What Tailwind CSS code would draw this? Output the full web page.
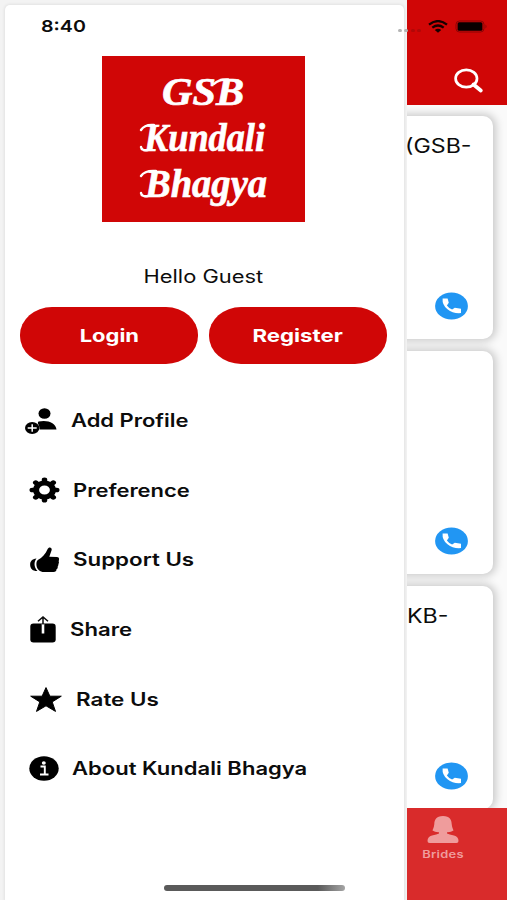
<!DOCTYPE html>
<html lang="en">
    <head>
        <meta charset="UTF-8" />
        <meta name="viewport" content="width=device-width, initial-scale=1" />
        <title>GSB Kundali Bhagya</title>
        <script src="https://cdn.jsdelivr.net/npm/@tailwindcss/browser@4"></script>
    </head>
    <body class="relative w-[507px] h-[900px] overflow-hidden bg-[#fafafa] font-['Inter',sans-serif] text-[#0c0c0c]">

        <!-- Profile list behind the drawer -->
        <main class="flex flex-col w-full h-full">
            <header class="shrink-0 h-[105px] bg-[#d00606] flex flex-col items-end">
                <div class="h-[53px] pr-[19px] flex items-center gap-[7px]">
                    <svg class="w-[20px] h-[13px]" viewBox="0 0 20 13" fill="none" stroke="#160000" stroke-width="2.3">
                        <path d="M1 4.6Q10-2.4 19 4.6" />
                        <path d="M4.3 7.7Q10 3.3 15.7 7.7" />
                        <path d="M6.8 9.9Q10 7.4 13.2 9.9L10 12.8Z" fill="#160000" stroke="none" />
                    </svg>
                    <svg class="w-[33px] h-[13px]" viewBox="0 0 33 13">
                        <rect x="1" y="1" width="28" height="11" rx="3.5" fill="none" stroke="#8a0505" stroke-width="1" />
                        <rect x="2.6" y="2.2" width="24.8" height="8.6" rx="1.6" fill="#080000" />
                        <path d="M30.5 4.5Q32.5 6.5 30.5 8.5Z" fill="#8a0505" />
                    </svg>
                </div>
                <svg class="mt-[15px] mr-[23px] w-[30px] h-[26px]" viewBox="0 0 30 26" fill="none" stroke="#fff">
                    <ellipse cx="12.300" cy="10.500" rx="10.700" ry="8.700" stroke-width="2.700" />
                    <path d="M19.500 16.500l7.300 6" stroke-width="3.800" stroke-linecap="round" />
                </svg>
            </header>

            <div class="flex-1 min-h-0 overflow-hidden flex flex-col pt-[11px] pr-[14px]">
                <section class="shrink-0 h-[223px] mb-[12px] rounded-r-[10px] bg-white shadow-[1px_0_8px_2px_rgba(0,0,0,0.20)] flex flex-col justify-between pl-[405px] pt-[17px] pb-[19.500px]">
                    <h2 class="text-[19.5px] leading-[26px] whitespace-nowrap origin-left scale-x-[1.19]">(GSB-</h2>
                    <svg class="ml-[30px] w-[33px] h-[28px]" viewBox="0 0 33 28">
                        <ellipse cx="16.5" cy="14" rx="16.4" ry="13.6" fill="#2196f3" />
                        <path d="M7.600 6.400h5l1.200 4.400-1.900 2.600q2 2.800 5.200 4.200l2.700-1.800 6.200 1v4.300q-8 .7-13.500-3.800T7.600 6.400Z" fill="#fff" />
                    </svg>
                </section>
                <section class="shrink-0 h-[223px] mb-[12px] rounded-r-[10px] bg-white shadow-[1px_0_8px_2px_rgba(0,0,0,0.20)] flex flex-col justify-end pl-[405px] pb-[19.500px]">
                    <svg class="ml-[30px] w-[33px] h-[28px]" viewBox="0 0 33 28">
                        <ellipse cx="16.5" cy="14" rx="16.4" ry="13.6" fill="#2196f3" />
                        <path d="M7.600 6.400h5l1.200 4.400-1.900 2.600q2 2.800 5.200 4.200l2.700-1.800 6.200 1v4.300q-8 .7-13.500-3.800T7.600 6.400Z" fill="#fff" />
                    </svg>
                </section>
                <section class="shrink-0 h-[223px] rounded-r-[10px] bg-white shadow-[1px_0_8px_2px_rgba(0,0,0,0.20)] flex flex-col justify-between pl-[406.500px] pt-[17px] pb-[19.500px]">
                    <h2 class="text-[19.5px] leading-[26px] whitespace-nowrap origin-left scale-x-[1.19]">KB-</h2>
                    <svg class="ml-[28.500px] w-[33px] h-[28px]" viewBox="0 0 33 28">
                        <ellipse cx="16.5" cy="14" rx="16.4" ry="13.6" fill="#2196f3" />
                        <path d="M7.600 6.400h5l1.200 4.400-1.900 2.600q2 2.800 5.200 4.200l2.700-1.800 6.200 1v4.300q-8 .7-13.500-3.800T7.600 6.400Z" fill="#fff" />
                    </svg>
                </section>
            </div>

            <nav class="shrink-0 relative h-[92px] bg-[#d92b2b] flex justify-end pr-[32px]">
                <div class="w-[64px] flex flex-col items-center pt-[8px] text-[#ef9c9c]">
                    <svg class="w-[32px] h-[27px]" viewBox="0 0 32 27" fill="currentColor">
                        <path d="M16 0C9 0 7.500 4 7.300 8 7 11.500 6 13 5.500 14.500Q8 16.500 12 16.300V17.500Q10 18.500 5 19.500 .5 20.500 .5 25 .5 27 2.500 27H29.500Q31.500 27 31.500 25 31.500 20.500 27 19.500 22 18.500 20 17.500V16.300Q24 16.500 26.500 14.500C26 13 25 11.500 24.700 8 24.500 4 23 0 16 0Z" />
                    </svg>
                    <span class="mt-[4px] text-[10px] leading-[14px] font-semibold scale-x-[1.29] tracking-[0.2px]">Brides</span>
                </div>
            </nav>
        </main>

        <!-- Drawer -->
        <aside class="absolute left-0 top-0 w-[406.500px] h-full bg-[#f3f3f3] pl-[5px] pt-[5px] pr-[3px]">
            <div class="w-full h-full rounded-t-[5px] bg-white shadow-[0_0_3px_1px_rgba(0,0,0,0.07)] flex flex-col">
                <div class="shrink-0 h-[51px] pl-[36px] flex">
                    <span class="mt-[9px] text-[16.500px] leading-[24px] font-semibold origin-left scale-x-[1.19]">8:40</span>
                </div>

                <svg class="shrink-0 ml-[97px] w-[203px] h-[166px] bg-[#d00606]" viewBox="0 0 203 166" fill="#fff" stroke="#fff" stroke-width=".7" font-family="'Liberation Serif', serif" font-weight="bold" font-style="italic" font-size="41">
                    <text x="60" y="49" textLength="82" lengthAdjust="spacingAndGlyphs">GSB</text>
                    <text x="42" y="95" textLength="121" lengthAdjust="spacingAndGlyphs">Kundali</text>
                    <text x="43" y="141" textLength="122" lengthAdjust="spacingAndGlyphs">Bhagya</text>
                    <!-- swashes on the capitals -->
                    <path d="M112 28Q117 23 126 23.500M39 74Q43 68 52 69M39 120Q43 114 54 115M39 91Q39.500 95 46 94M39 137Q39.500 141 46 140" fill="none" stroke-width="2.400" stroke-linecap="round" />
                </svg>

                <p class="mt-[41.500px] h-[26px] pr-[1.500px] text-center text-[18px] leading-[26px] scale-x-[1.215]">Hello Guest</p>

                <div class="mt-[17.500px] pl-[15px] pr-[16.500px] flex gap-[11px] text-white text-[18px] font-bold">
                    <button class="flex-1 h-[57px] rounded-[32px/28px] bg-[#d00606]"><span class="inline-block scale-x-[1.22]">Login</span></button>
                    <button class="flex-1 h-[57px] rounded-[32px/28px] bg-[#d00606]"><span class="inline-block scale-x-[1.235]">Register</span></button>
                </div>

                <ul class="mt-[22px] text-[18px] font-semibold whitespace-nowrap">
                    <li class="h-[69.600px] flex items-center">
                        <svg class="ml-[20px] w-[34px] h-[28px]" viewBox="0 0 34 28">
                            <ellipse cx="19.500" cy="6.500" rx="6" ry="5.300" />
                            <path d="M14.500 22.500C15 18 11.500 16.500 13.500 14.500 22 12.500 31 15.500 31.500 22.500Z" />
                            <ellipse cx="7.200" cy="21" rx="7.200" ry="6" />
                            <path d="M2.700 21h9M7.200 17.300v7.400" stroke="#fff" stroke-width="1.500" />
                        </svg>
                        <span class="ml-[12px] origin-left scale-x-[1.22]">Add Profile</span>
                    </li>
                    <li class="h-[69.600px] flex items-center">
                        <svg class="ml-[24px] w-[31px] h-[26px]" viewBox="0 0 31 26">
                            <g transform="translate(15.500 13) scale(1.200 1)" fill="none" stroke="#000">
                                <circle r="7" stroke-width="5" />
                                <!-- eight teeth -->
                                <path d="M0-10.200V-8M0 8v2.200M-10.200 0h2.200M8 0h2.200M-7.300-7.300l2 2M5.300 5.300l2 2M-7.300 7.300l2-2M5.300-5.300l2-2" stroke-width="4.600" stroke-linecap="round" />
                            </g>
                        </svg>
                        <span class="ml-[13px] origin-left scale-x-[1.22]">Preference</span>
                    </li>
                    <li class="h-[69.600px] flex items-center">
                        <svg class="ml-[25px] w-[30px] h-[26px]" viewBox="0 0 30 26">
                            <path d="M6.500 11.500C1.500 12-.2 15 .2 18.500 .6 22 3 24.300 7.500 24 4 20.500 3.500 15.500 6.500 11.500Z" />
                            <path d="M8.200 12.800C12 11 15.500 7 17.800 1.800 19.500-.8 22.500.8 21.500 3.500L19.300 9.800 27 10Q29.500 10.300 29 12.500L28.700 14.500Q29.300 15.500 28.400 17 28.600 18.600 27.700 19.500 28 21.500 26.500 22.300 26.500 25 23.500 25H14C10 25 7 22.500 6.500 18.500 6.200 16 6.500 14 8.200 12.800Z" />
                        </svg>
                        <span class="ml-[13px] origin-left scale-x-[1.24]">Support Us</span>
                    </li>
                    <li class="h-[69.600px] flex items-center">
                        <svg class="ml-[25px] w-[26px] h-[27px]" viewBox="0 0 26 27">
                            <rect x=".3" y="7.500" width="25.400" height="19" rx="3.200" />
                            <path d="M13 8v9.500" stroke="#fff" stroke-width="2.600" />
                            <path d="M13 8.500v-7M8 5.300l5-4.300 5 4.300" fill="none" stroke="#0c0c0c" stroke-width="1.500" />
                        </svg>
                        <span class="ml-[14px] origin-left scale-x-[1.23]">Share</span>
                    </li>
                    <li class="h-[69.600px] flex items-center">
                        <svg class="ml-[25px] w-[32px] h-[25px]" viewBox="0 0 32 25" stroke="#000" stroke-linejoin="round">
                            <path d="M16 .6L19.900 9.200H31.300L22.200 14.900 25.500 24.400 16 18.800 6.500 24.400 9.800 14.900 .7 9.200H12.100Z" />
                        </svg>
                        <span class="ml-[14px] origin-left scale-x-[1.245]">Rate Us</span>
                    </li>
                    <li class="h-[69.600px] flex items-center">
                        <svg class="ml-[24px] w-[30px] h-[25px]" viewBox="0 0 30 25">
                            <ellipse cx="15" cy="12.500" rx="14.700" ry="12.200" />
                            <ellipse cx="14.800" cy="7" rx="2" ry="1.700" fill="#fff" />
                            <path d="M11.500 10.500h4.300v7.800M11 18.500h8.500" fill="none" stroke="#fff" stroke-width="1.900" />
                        </svg>
                        <span class="ml-[13px] origin-left scale-x-[1.225]">About Kundali Bhagya</span>
                    </li>
                </ul>
            </div>
        </aside>

        <!-- Signal dots sit across the drawer edge -->
        <div class="absolute left-[397.500px] top-[29px] flex gap-[2.500px]">
            <i class="w-[4px] h-[3px] rounded-full bg-[#b5b5b5]"></i>
            <i class="w-[4px] h-[3px] rounded-full bg-[#b5b5b5]"></i>
            <i class="w-[4px] h-[3px] rounded-full bg-[#b00808]"></i>
            <i class="w-[4px] h-[3px] rounded-full bg-[#b00808]"></i>
        </div>
        <!-- Home indicator -->
        <div class="absolute left-[164px] top-[885px] w-[181px] h-[6px] rounded-full bg-linear-to-r from-[#5a5a5a] from-85% to-[#a5a5a5]"></div>
    </body>
</html>
